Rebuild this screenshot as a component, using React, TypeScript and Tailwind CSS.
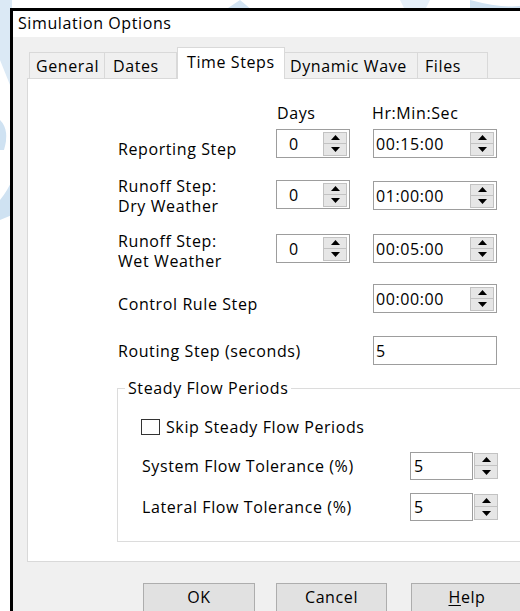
import React from "react";

const ui = "font-['Open_Sans',sans-serif] text-[16px] tracking-[0.6px] text-black";

function Tri({ down = false }: { down?: boolean }) {
  return (
    <svg width="9" height="5" viewBox="0 0 9 5">
      <path d={down ? "M0 0 L4.5 5 L9 0Z" : "M0 5 L4.5 0 L9 5Z"} fill="#000" />
    </svg>
  );
}

function Arrows({ half = 11 }: { half?: number }) {
  const h = half === 13 ? "h-[13px]" : "h-[12px]";
  return (
    <div className="flex flex-col w-[24px]">
      <div className={`${h} border border-[#c2c2c2] bg-[#e6e6e6] flex items-center justify-center`}>
        <Tri />
      </div>
      <div className={`${h} border border-t-0 border-[#c2c2c2] bg-[#e6e6e6] flex items-center justify-center`}>
        <Tri down />
      </div>
    </div>
  );
}

function DaysBox({ value }: { value: string }) {
  return (
    <div className="w-[74px] h-[29px] border border-[#9d9d9d] bg-white flex items-center pl-[12px] pr-[2px]">
      <span className="flex-1 leading-none">{value}</span>
      <Arrows />
    </div>
  );
}

function TimeBox({ value, spin = true }: { value: string; spin?: boolean }) {
  return (
    <div className="w-[124px] h-[29px] border border-[#9d9d9d] bg-white flex items-center pl-[2px] pr-[2px]">
      <span className="flex-1 leading-none">{value}</span>
      {spin && <Arrows />}
    </div>
  );
}

function ToleranceBox({ value }: { value: string }) {
  return (
    <div className="flex items-center">
      <div className="w-[63px] h-[28px] border border-[#9d9d9d] bg-white flex items-center pl-[3px]">
        <span className="leading-none">{value}</span>
      </div>
      <div className="ml-[1px]">
        <Arrows half={13} />
      </div>
    </div>
  );
}

const tabs = [
  { name: "General", w: "w-[76px]", pl: "pl-[6px]" },
  { name: "Dates", w: "w-[72px]", pl: "pl-[8px]" },
  { name: "Time Steps", w: "w-[108px]", pl: "pl-[9px]", active: true },
  { name: "Dynamic Wave", w: "w-[133px]", pl: "pl-[5px]" },
  { name: "Files", w: "w-[70px]", pl: "pl-[7px]" },
];

export default function App() {
  return (
    <div className={`relative w-[520px] h-[611px] overflow-hidden bg-white ${ui}`}>
      {/* desktop wallpaper strokes behind the dialog */}
      <svg className="absolute inset-0" width="520" height="611" viewBox="0 0 520 611">
        <path d="M0 0 L12 0 L12 90 L0 60Z" fill="#dbe9f5" />
        <path d="M0 120 Q10 130 4 150 L0 150Z" fill="#cfe2f2" />
        <path d="M0 200 Q8 190 12 180 L12 215 L0 220Z" fill="#cfe2f2" />
        <path d="M225 10 L240 0 L252 10Z" fill="#d3e4f3" />
        <path d="M470 0 Q500 8 520 6 L520 10 L470 10Z" fill="#cfe2f2" />
        <path d="M400 0 L430 0 L425 10 L405 10Z" fill="#e6f0f9" />
      </svg>

      <div className="relative ml-[10px] mt-[8px] w-[560px] h-[640px] border-l-[3px] border-t-[3px] border-black bg-[#f0f0f0]">
        {/* title bar */}
        <div className="h-[26px] bg-white flex items-center pl-[5px] pb-[2px]">Simulation Options</div>

        {/* tab strip */}
        <div className="mt-[10px] ml-[16px] h-[31px] flex items-end">
          {tabs.map((t) =>
            t.active ? (
              <div
                key={t.name}
                className={`relative z-10 -mb-[1px] h-[32px] ${t.w} ${t.pl} bg-white border border-b-0 border-[#d9d9d9] flex items-center pb-[3px]`}
              >
                {t.name}
              </div>
            ) : (
              <div
                key={t.name}
                className={`h-[26px] ${t.w} ${t.pl} bg-[#f0f0f0] border border-b-0 border-l-0 first:border-l border-[#d9d9d9] flex items-center`}
              >
                {t.name}
              </div>
            )
          )}
        </div>

        {/* tab page */}
        <div className="ml-[14px] w-[530px] h-[484px] bg-white border border-[#d9d9d9] pl-[90px] pt-[24px] flex flex-col">
          {/* column captions */}
          <div className="flex h-[20px] items-center">
            <div className="w-[159px]" />
            <div className="w-[95px]">Days</div>
            <div>Hr:Min:Sec</div>
          </div>

          {/* Reporting step */}
          <div className="mt-[6px] flex items-start">
            <div className="w-[158px] mt-[10px] leading-[20px]">Reporting Step</div>
            <DaysBox value="0" />
            <div className="ml-[23px]">
              <TimeBox value="00:15:00" />
            </div>
          </div>

          {/* Runoff dry */}
          <div className="mt-[17px] flex items-start">
            <div className="w-[158px] leading-[20px]">
              Runoff Step:
              <br />
              Dry Weather
            </div>
            <div className="mt-[4px]">
              <DaysBox value="0" />
            </div>
            <div className="ml-[23px] mt-[5px]">
              <TimeBox value="01:00:00" />
            </div>
          </div>

          {/* Runoff wet */}
          <div className="mt-[15px] flex items-start">
            <div className="w-[158px] leading-[20px]">
              Runoff Step:
              <br />
              Wet Weather
            </div>
            <div className="mt-[3px]">
              <DaysBox value="0" />
            </div>
            <div className="ml-[23px] mt-[3px]">
              <TimeBox value="00:05:00" />
            </div>
          </div>

          {/* Control rule step */}
          <div className="mt-[13px] flex items-start">
            <div className="w-[255px] mt-[10px] leading-[20px]">Control Rule Step</div>
            <TimeBox value="00:00:00" />
          </div>

          {/* Routing step */}
          <div className="mt-[22px] flex items-start">
            <div className="w-[255px] mt-[5px] leading-[20px]">Routing Step (seconds)</div>
            <TimeBox value="5" spin={false} />
          </div>

          {/* Steady flow periods group */}
          <div className="relative mt-[23px] -ml-[1px] w-[430px] h-[154px] border border-[#dcdcdc] pl-[24px]">
            <div className="absolute -top-[11px] left-[7px] bg-white px-[3px] leading-[20px]">
              Steady Flow Periods
            </div>
            <div className="mt-[28px] flex items-center h-[20px] -ml-[1px]">
              <div className="w-[19px] h-[16px] border border-[#333] bg-white" />
              <span className="ml-[6px]">Skip Steady Flow Periods</span>
            </div>
            <div className="mt-[15px] flex items-center">
              <div className="w-[268px]">System Flow Tolerance (%)</div>
              <ToleranceBox value="5" />
            </div>
            <div className="mt-[13px] flex items-center">
              <div className="w-[268px]">Lateral Flow Tolerance (%)</div>
              <ToleranceBox value="5" />
            </div>
          </div>
        </div>

        {/* dialog buttons */}
        <div className="mt-[21px] ml-[130px] flex">
          <button className="w-[112px] h-[31px] pb-[3px] bg-[#e1e1e1] border border-[#adadad] flex items-center justify-center">
            OK
          </button>
          <button className="ml-[21px] w-[111px] h-[31px] pb-[3px] bg-[#e1e1e1] border border-[#adadad] flex items-center justify-center">
            Cancel
          </button>
          <button className="ml-[24px] w-[112px] h-[31px] pb-[3px] bg-[#e1e1e1] border border-[#adadad] flex items-center justify-center">
            <span>
              <span className="underline underline-offset-2">H</span>elp
            </span>
          </button>
        </div>
      </div>
    </div>
  );
}
